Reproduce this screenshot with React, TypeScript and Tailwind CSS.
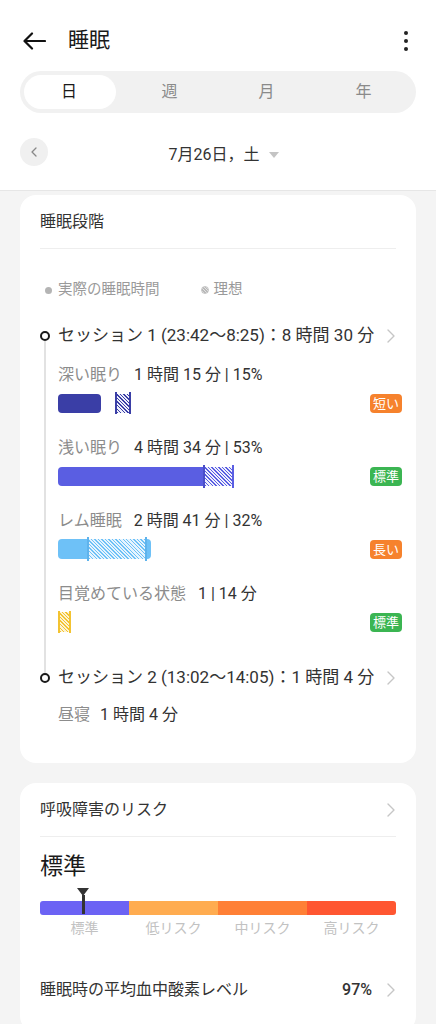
import React from "react";

const Chevron = () => (
  <svg width="8" height="14" viewBox="0 0 8 14" className="shrink-0">
    <path d="M1 1l6 6-6 6" stroke="#c6c6c6" strokeWidth="1.4" fill="none" strokeLinecap="round" strokeLinejoin="round" />
  </svg>
);

function Badge({ text, color }: { text: string; color: "orange" | "green" }) {
  return (
    <span
      className={
        "shrink-0 w-[32px] h-[19px] rounded-[4px] text-white text-[13px] leading-[19px] text-center " +
        (color === "orange" ? "bg-[#f6822d]" : "bg-[#3bb552]")
      }
    >
      {text}
    </span>
  );
}

function Stage({
  label,
  value,
  bar,
  badge,
}: {
  label: string;
  value: string;
  bar: React.ReactNode;
  badge: React.ReactNode;
}) {
  return (
    <div>
      <div className="flex items-center h-6 text-[16px] leading-6">
        <span className="text-[#8c8c8c]">{label}</span>
        <span className="ml-[12px] text-[#333]">{value}</span>
      </div>
      <div className="mt-[6px] flex items-center h-[20px] mr-[-6px]">
        <div className="flex-1 flex items-center">{bar}</div>
        {badge}
      </div>
    </div>
  );
}

export default function App() {
  return (
    <div className="w-[436px] min-h-[1024px] bg-[#f4f4f4] font-['Roboto','Noto_Sans_CJK_JP',sans-serif] text-[#222]">
      {/* top white area */}
      <div className="bg-white border-b border-[#e6e6e6] pb-[24px]">
        <div className="mt-[13px] h-14 flex items-center pl-[23px] pr-[28px]">
          <svg width="23" height="18" viewBox="0 0 23 18" className="shrink-0">
            <path d="M22 9H2M9 1.5L1.5 9 9 16.5" stroke="#111" strokeWidth="2.2" fill="none" strokeLinecap="round" strokeLinejoin="round" />
          </svg>
          <span className="ml-[22px] text-[21px] text-[#1a1a1a]">睡眠</span>
          <div className="ml-auto flex flex-col gap-[4px] items-center">
            <span className="w-[4px] h-[4px] rounded-full bg-[#222]" />
            <span className="w-[4px] h-[4px] rounded-full bg-[#222]" />
            <span className="w-[4px] h-[4px] rounded-full bg-[#222]" />
          </div>
        </div>
        <div className="mt-[2px] mx-[20px] h-[42px] rounded-full bg-[#f1f1f1] p-[4px] grid grid-cols-4 text-[16px]">
          <div className="rounded-full bg-white flex items-center justify-center text-[#1a1a1a] mr-[5px] pr-[2px]">日</div>
          <div className="flex items-center justify-center text-[#8a8a8a]">週</div>
          <div className="flex items-center justify-center text-[#8a8a8a]">月</div>
          <div className="flex items-center justify-center text-[#8a8a8a]">年</div>
        </div>
        <div className="mt-[25px] mx-[20px] h-[28px] flex items-center">
          <div className="w-[28px] h-[28px] rounded-full bg-[#f0f0f0] flex items-center justify-center">
            <svg width="6" height="10" viewBox="0 0 6 10">
              <path d="M5 1L1 5l4 4" stroke="#888" strokeWidth="1.3" fill="none" strokeLinecap="round" strokeLinejoin="round" />
            </svg>
          </div>
          <div className="flex-1 flex items-center justify-center pr-[28px] pt-[5px]">
            <span className="text-[16px] text-[#333] ml-[12px]">7月26日，土</span>
            <svg width="10" height="6" viewBox="0 0 10 6" className="ml-[10px]">
              <path d="M0 0h10L5 6z" fill="#c4c4c4" />
            </svg>
          </div>
        </div>
      </div>

      {/* card 1 */}
      <div className="mt-[4px] mx-[20px] bg-white rounded-[16px] px-[20px] pt-[15px] pb-[36px]">
        <div className="h-6 text-[16px] leading-6 text-[#333]">睡眠段階</div>
        <div className="mt-[14px] h-px bg-[#eeeeee]" />
        <div className="mt-[31px] h-5 flex items-center text-[14.5px] text-[#9a9a9a]">
          <span className="ml-[5px] w-[7px] h-[7px] rounded-full bg-[#b4b4b4]" />
          <span className="ml-[6px]">実際の睡眠時間</span>
          <span className="ml-[41px] w-[8px] h-[8px] rounded-full border border-[#c4c4c4] bg-[repeating-linear-gradient(45deg,#b8b8b8_0px,#b8b8b8_1px,#e4e4e4_1px,#e4e4e4_2px)]" />
          <span className="ml-[5px]">理想</span>
        </div>

        {/* session 1 */}
        <div className="mt-[24px] flex h-6 items-stretch">
          <div className="w-[10px] flex flex-col items-center shrink-0">
            <div className="flex-1" />
            <div className="w-[10px] h-[10px] rounded-full border-[2.5px] border-[#1a1a1a]" />
            <div className="flex-1 w-[2px] bg-[#e2e2e2]" />
          </div>
          <div className="ml-[8px] flex-1 flex items-center text-[17px] text-[#333]">
            <span>セッション 1 (23:42〜8:25)：8 時間 30 分</span>
            <span className="ml-auto mr-[1px]"><Chevron /></span>
          </div>
        </div>

        {/* stages */}
        <div className="flex">
          <div className="w-[10px] flex justify-center shrink-0">
            <div className="w-[2px] bg-[#e2e2e2]" />
          </div>
          <div className="ml-[8px] flex-1 pt-[15px] pb-[34px] flex flex-col gap-[23px]">
            <Stage
              label="深い眠り"
              value="1 時間 15 分 | 15%"
              badge={<Badge text="短い" color="orange" />}
              bar={
                <>
                  <div className="w-[43px] h-[19px] rounded-[4px] bg-[#3a3ea6]" />
                  <div className="ml-[14px] flex items-center">
                    <div className="w-[2px] h-[22px] bg-[#3a3ea6]" />
                    <div className="w-[12px] h-[19px] bg-[repeating-linear-gradient(45deg,#3a3ea6_0px,#3a3ea6_1px,#eef0fb_1px,#eef0fb_2.5px)]" />
                    <div className="w-[2px] h-[22px] bg-[#3a3ea6]" />
                  </div>
                </>
              }
            />
            <Stage
              label="浅い眠り"
              value="4 時間 34 分 | 53%"
              badge={<Badge text="標準" color="green" />}
              bar={
                <>
                  <div className="w-[145px] h-[19px] rounded-l-[4px] bg-[#5a5ee2]" />
                  <div className="w-[2px] h-[23px] bg-[#4a4ec8]" />
                  <div className="w-[27px] h-[19px] bg-[repeating-linear-gradient(45deg,#5a5ee2_0px,#5a5ee2_1px,#eef0fc_1px,#eef0fc_2.5px)]" />
                  <div className="w-[2px] h-[23px] bg-[#5a5ee2]" />
                </>
              }
            />
            <Stage
              label="レム睡眠"
              value="2 時間 41 分 | 32%"
              badge={<Badge text="長い" color="orange" />}
              bar={
                <>
                  <div className="w-[29px] h-[20px] rounded-l-[4px] bg-[#6ec1f7]" />
                  <div className="w-[2px] h-[24px] bg-[#5fb3ec]" />
                  <div className="w-[56px] h-[20px] bg-[repeating-linear-gradient(45deg,#6ec1f7_0px,#6ec1f7_1px,#e6f4fe_1px,#e6f4fe_2.5px)]" />
                  <div className="w-[2px] h-[24px] bg-[#5fb3ec]" />
                  <div className="w-[4px] h-[20px] rounded-r-[4px] bg-[#6ec1f7]" />
                </>
              }
            />
            <Stage
              label="目覚めている状態"
              value="1 | 14 分"
              badge={<Badge text="標準" color="green" />}
              bar={
                <>
                  <div className="w-[2px] h-[22px] bg-[#f3c331]" />
                  <div className="w-[9px] h-[20px] bg-[repeating-linear-gradient(45deg,#f3c331_0px,#f3c331_1px,#fdf3d2_1px,#fdf3d2_2.5px)]" />
                  <div className="w-[2px] h-[22px] bg-[#f3c331]" />
                </>
              }
            />
          </div>
        </div>

        {/* session 2 */}
        <div className="flex h-6 items-stretch">
          <div className="w-[10px] flex flex-col items-center shrink-0">
            <div className="flex-1 w-[2px] bg-[#e2e2e2]" />
            <div className="w-[10px] h-[10px] rounded-full border-[2.5px] border-[#1a1a1a]" />
            <div className="flex-1" />
          </div>
          <div className="ml-[8px] flex-1 flex items-center text-[17px] text-[#333]">
            <span>セッション 2 (13:02〜14:05)：1 時間 4 分</span>
            <span className="ml-auto mr-[1px]"><Chevron /></span>
          </div>
        </div>
        <div className="mt-[13px] ml-[18px] h-6 flex items-center text-[16px]">
          <span className="text-[#8c8c8c]">昼寝</span>
          <span className="ml-[10px] text-[#333]">1 時間 4 分</span>
        </div>
      </div>

      {/* card 2 */}
      <div className="mt-[20px] mx-[20px] bg-white rounded-[16px] px-[20px] pt-[15px] pb-[30px]">
        <div className="h-6 flex items-center text-[16px] text-[#333]">
          <span>呼吸障害のリスク</span>
          <span className="ml-auto mr-[1px]"><Chevron /></span>
        </div>
        <div className="mt-[14px] h-px bg-[#eeeeee]" />
        <div className="mt-[14px] h-[32px] leading-[32px] text-[23px] text-[#1a1a1a]">標準</div>
        <div className="mt-[18px] relative h-[14px] flex rounded-[3px] overflow-visible">
          <div className="flex-1 bg-[#6c63f4] rounded-l-[3px]" />
          <div className="flex-1 bg-[#ffac50]" />
          <div className="flex-1 bg-[#ff8036]" />
          <div className="flex-1 bg-[#ff5631] rounded-r-[3px]" />
          <div className="absolute left-[37px] top-[-13px] flex flex-col items-center">
            <svg width="12" height="8" viewBox="0 0 12 8">
              <path d="M0 0h12L6 8z" fill="#333" />
            </svg>
            <div className="w-[3px] h-[19px] bg-[#333] mt-[-1px]" />
          </div>
        </div>
        <div className="mt-[3px] grid grid-cols-4 text-center text-[14px] leading-5 text-[#c2c2c2]">
          <span>標準</span>
          <span>低リスク</span>
          <span>中リスク</span>
          <span>高リスク</span>
        </div>
        <div className="mt-[40px] h-6 flex items-center text-[16px] text-[#333]">
          <span>睡眠時の平均血中酸素レベル</span>
          <span className="ml-auto font-medium">97%</span>
          <span className="ml-[15px] mr-[1px]"><Chevron /></span>
        </div>
      </div>
    </div>
  );
}
